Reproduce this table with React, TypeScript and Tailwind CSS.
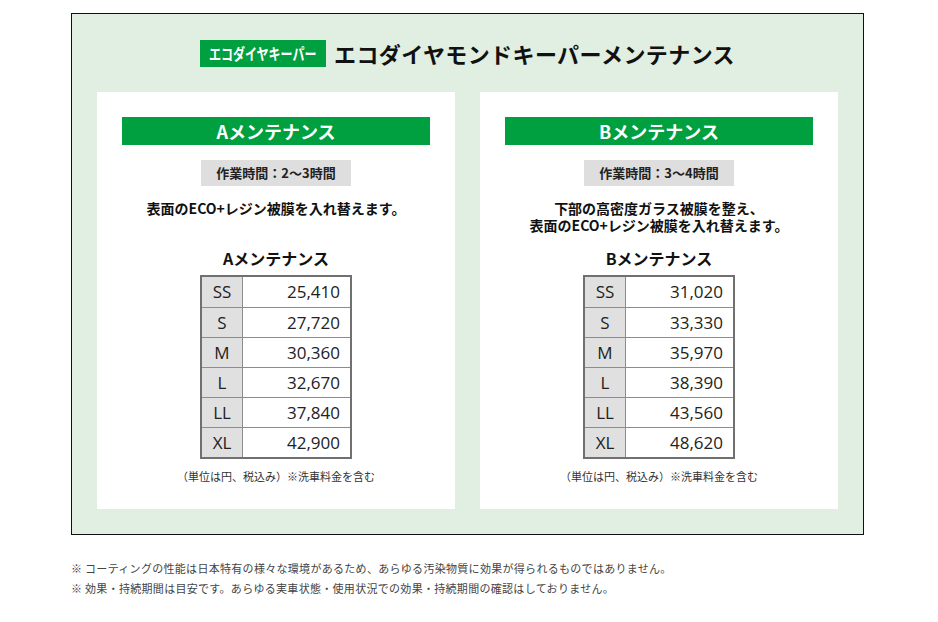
import React from "react";

type Row = [string, string];

const rowsA: Row[] = [
  ["SS", "25,410"],
  ["S", "27,720"],
  ["M", "30,360"],
  ["L", "32,670"],
  ["LL", "37,840"],
  ["XL", "42,900"],
];

const rowsB: Row[] = [
  ["SS", "31,020"],
  ["S", "33,330"],
  ["M", "35,970"],
  ["L", "38,390"],
  ["LL", "43,560"],
  ["XL", "48,620"],
];

function Card({
  title,
  time,
  desc,
  rows,
}: {
  title: string;
  time: string;
  desc: string[];
  rows: Row[];
}) {
  return (
    <div className="bg-white flex flex-col items-center px-[25px] pt-[25px] pb-[25px]">
      <div className="w-full h-[28px] bg-[#00a040] text-white text-[18px] font-bold flex items-center justify-center">
        {title}
      </div>
      <div className="mt-[15px] w-[150px] h-[26px] bg-[#dedede] text-[13px] font-bold flex items-center justify-center text-[#222]">
        {time}
      </div>
      <div className="mt-[14px] h-[34px] text-[14px] leading-[17px] font-bold text-center text-[#111]">
        {desc.map((d, i) => (
          <div key={i}>{d}</div>
        ))}
      </div>
      <div className="mt-[13px] text-[16px] leading-[22px] font-bold text-[#111]">{title}</div>
      <div className="mt-[6px] w-[152px] border-2 border-[#707070] font-['Open_Sans',sans-serif] text-[#222]">
        {rows.map(([k, v], i) => (
          <div
            key={k}
            className={
              i === 0
                ? "flex h-[30px]"
                : "flex h-[30px] border-t border-[#8c8c8c]"
            }
          >
            <div className="w-[41px] bg-[#e0e0e0] border-r border-[#8c8c8c] flex items-center justify-center text-[17px]">
              {k}
            </div>
            <div className="flex-1 flex items-center justify-end pr-[10px] text-[17px]">{v}</div>
          </div>
        ))}
      </div>
      <div className="mt-[9px] text-[11px] leading-[16px] text-[#333]">
        （単位は円、税込み）※洗車料金を含む
      </div>
    </div>
  );
}

export default function App() {
  return (
    <div className="w-[938px] h-[622px] bg-white font-['Noto_Sans_CJK_JP',sans-serif] text-[#111] overflow-hidden">
      <div className="pt-[13px] pl-[71px]">
        <div className="w-[793px] border border-[#111] bg-[#e0efe2] px-[25px] pt-[25px] pb-[25px]">
          <div className="h-[28px] flex items-center justify-center gap-[8px]">
            <div className="w-[126px] h-[27px] bg-[#00a040] flex items-center justify-center overflow-hidden">
              <span className="inline-block text-white text-[16px] font-bold scale-x-75 whitespace-nowrap">
                エコダイヤキーパー
              </span>
            </div>
            <div className="text-[22px] font-bold leading-[28px] tracking-[0.4px] text-[#111]">
              エコダイヤモンドキーパーメンテナンス
            </div>
          </div>
          <div className="mt-[25px] grid grid-cols-2 gap-[25px]">
            <Card
              title="Aメンテナンス"
              time="作業時間：2～3時間"
              desc={["表面のECO+レジン被膜を入れ替えます。"]}
              rows={rowsA}
            />
            <Card
              title="Bメンテナンス"
              time="作業時間：3～4時間"
              desc={["下部の高密度ガラス被膜を整え、", "表面のECO+レジン被膜を入れ替えます。"]}
              rows={rowsB}
            />
          </div>
        </div>
        <div className="mt-[23px] text-[11px] leading-[20px] text-[#444] tracking-[0.3px]">
          <div>※ コーティングの性能は日本特有の様々な環境があるため、あらゆる汚染物質に効果が得られるものではありません。</div>
          <div>※ 効果・持続期間は目安です。あらゆる実車状態・使用状況での効果・持続期間の確認はしておりません。</div>
        </div>
      </div>
    </div>
  );
}
